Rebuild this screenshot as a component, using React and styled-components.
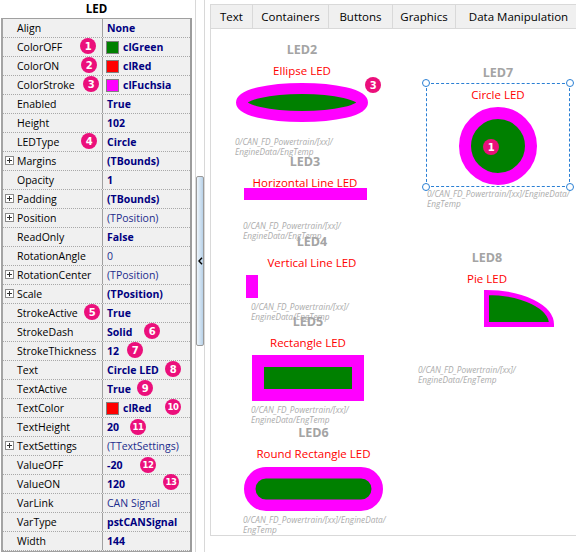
import React from 'react';
import styled, { createGlobalStyle } from 'styled-components';

const UI = `"Open Sans", "Noto Sans", "Liberation Sans", sans-serif`;
const OX = 211;
const OY = 29;

const Global = createGlobalStyle`
  html, body { margin: 0; padding: 0; background: #fff; }
  body { width: 576px; height: 552px; overflow: hidden; font-family: ${UI}; }
  #root { width: 576px; height: 552px; }
`;

const Page = styled.div`
  display: flex;
  width: 576px;
  height: 552px;
  overflow: hidden;
  background: #fff;
`;

/* ---------- Object inspector ---------- */
const Inspector = styled.div`
  position: relative;
  flex: none;
  width: 193px;
  display: flex;
  flex-direction: column;
`;
const InspectorTitle = styled.div`
  height: 18px;
  line-height: 18px;
  text-align: center;
  font-weight: 700;
  font-size: 11.5px;
  color: #000;
`;
const Grid = styled.div`
  flex: none;
  margin-left: 1px;
  width: 191px;
  box-sizing: border-box;
  border-top: 1px solid #a0a0a0;
  border-left: 2px solid #a4a4a4;
  border-right: 2px solid #9c9c9c;
  border-bottom: 1px solid #a0a0a0;
  background: #f0f0f0;
`;
const Row = styled.div`
  display: flex;
  height: 19px;
  box-sizing: border-box;
  border-bottom: 1px dotted #a8a8a8;
`;
const Name = styled.div`
  position: relative;
  flex: none;
  width: 100px;
  box-sizing: border-box;
  border-right: 1px solid #a0a0a0;
  padding-left: 14px;
  font-size: 10.5px;
  line-height: 18px;
  color: #000;
  white-space: nowrap;
`;
const Value = styled.div`
  flex: 1;
  display: flex;
  align-items: center;
  gap: 4px;
  padding-left: 4px;
  font-size: 10.5px;
  font-weight: ${p => (p.$bold ? 700 : 400)};
  color: ${p => (p.$bold ? '#000080' : '#1c2c8c')};
  white-space: nowrap;
  overflow: hidden;
`;
const Expander = styled.span`
  position: absolute;
  left: 2px;
  top: 4px;
  width: 9px;
  height: 9px;
  box-sizing: border-box;
  border: 1px solid #8a8a8a;
  background: #fff;
  &::before {
    content: '';
    position: absolute;
    left: 1px;
    top: 3px;
    width: 5px;
    height: 1px;
    background: #303030;
  }
  &::after {
    content: '';
    position: absolute;
    left: 3px;
    top: 1px;
    width: 1px;
    height: 5px;
    background: #303030;
  }
`;
const Swatch = styled.span`
  flex: none;
  margin-left: -1px;
  width: 13px;
  height: 13px;
  box-sizing: border-box;
  border: 1px solid #808080;
  background: ${p => p.$color};
`;

const Badge = styled.div`
  position: absolute;
  left: ${p => p.$cx - 8}px;
  top: ${p => p.$cy - 8}px;
  width: 16px;
  height: 16px;
  border-radius: 50%;
  background: #eb0f7b;
  color: #fff;
  font-family: "DejaVu Sans", sans-serif;
  font-weight: 700;
  font-size: ${p => (p.$n > 9 ? 8.5 : 10)}px;
  display: flex;
  align-items: center;
  justify-content: center;
  z-index: 5;
  letter-spacing: -0.3px;
`;

/* ---------- Splitter ---------- */
const Splitter = styled.div`
  flex: none;
  width: 17px;
  padding-left: 2px;
  box-sizing: border-box;
  display: flex;
`;
const SplitTrack = styled.div`
  width: 10px;
  box-sizing: border-box;
  border-left: 1px solid #d8d8d8;
  border-right: 1px solid #d8d8d8;
  padding-top: 176px;
  display: flex;
  justify-content: center;
  align-items: flex-start;
`;
const SplitThumb = styled.div`
  width: 8px;
  height: 170px;
  box-sizing: border-box;
  border: 1px solid #9a9a9a;
  border-radius: 2px;
  background: linear-gradient(to right, #eef5fb, #b7d1e8);
  display: flex;
  align-items: center;
  justify-content: center;
`;

/* ---------- Designer ---------- */
const Designer = styled.div`
  flex: none;
  width: 372px;
  height: 536px;
  padding-top: 4px;
  box-sizing: border-box;
  display: flex;
  flex-direction: column;
`;
const DesignerFrame = styled.div`
  flex: 1;
  display: flex;
  flex-direction: column;
  border: 1px solid #d9d9d9;
  border-right: none;
`;
const TabStrip = styled.div`
  flex: none;
  display: flex;
  height: 24px;
  box-sizing: border-box;
  border-bottom: 1px solid #d9d9d9;
  background: #f0f0f0;
`;
const Tab = styled.div`
  flex: none;
  width: ${p => p.$w}px;
  box-sizing: border-box;
  border-right: 1px solid #d9d9d9;
  display: flex;
  align-items: center;
  justify-content: center;
  font-size: 11.5px;
  color: #000;
  white-space: nowrap;
`;
const Canvas = styled.div`
  position: relative;
  flex: 1;
  background: #fff;
  overflow: hidden;
`;

/* an LED component placed on the free design canvas */
const LedNode = styled.div`
  position: absolute;
  left: ${p => p.$x - OX}px;
  top: ${p => p.$y - OY}px;
  width: ${p => p.$w}px;
  display: flex;
  flex-direction: column;
  align-items: center;
  gap: 4px;
`;
const LedName = styled.div`
  height: 18px;
  font-weight: 700;
  font-size: 12.5px;
  line-height: 18px;
  color: #a4a4a4;
  white-space: nowrap;
`;
const LedText = styled.div`
  height: 16px;
  font-size: 11.5px;
  line-height: 16px;
  color: #ff0000;
  white-space: nowrap;
`;
const ShapeSlot = styled.div`
  align-self: ${p => (p.$start ? 'flex-start' : 'center')};
  margin-top: ${p => p.$mt || 0}px;
  margin-left: ${p => p.$ml || 0}px;
  line-height: 0;
  svg { display: block; overflow: visible; }
`;
const Caption = styled.div`
  align-self: flex-start;
  margin-top: ${p => p.$mt || 0}px;
  margin-left: ${p => p.$ml || 0}px;
  font-style: italic;
  font-size: 8.3px;
  line-height: 10px;
  color: #ababab;
  white-space: nowrap;
  position: relative;
  z-index: 1;
`;
const Selection = styled.div`
  position: relative;
  margin-top: -3px;
  width: 144px;
  height: 104px;
  box-sizing: border-box;
  padding-top: 3px;
  border: 1px dashed #2a7fd4;
  display: flex;
  flex-direction: column;
  align-items: center;
  gap: 3.5px;
  z-index: 2;
`;
const Handle = styled.span`
  position: absolute;
  width: 8px;
  height: 8px;
  box-sizing: border-box;
  border: 1px solid #2a7fd4;
  border-radius: 50%;
  background: #fff;
  left: ${p => (p.$r ? 'auto' : '-5px')};
  right: ${p => (p.$r ? '-5px' : 'auto')};
  top: ${p => (p.$b ? 'auto' : '-5px')};
  bottom: ${p => (p.$b ? '-5px' : 'auto')};
`;
const CanvasBadge = styled(Badge)`
  left: ${p => p.$cx - OX - 8}px;
  top: ${p => p.$cy - OY - 8}px;
`;

const props = [
  { l: 'Align', v: 'None', b: true },
  { l: 'ColorOFF', v: 'clGreen', b: true, sw: '#008000' },
  { l: 'ColorON', v: 'clRed', b: true, sw: '#ff0000' },
  { l: 'ColorStroke', v: 'clFuchsia', b: true, sw: '#ff00ff' },
  { l: 'Enabled', v: 'True', b: true },
  { l: 'Height', v: '102', b: true },
  { l: 'LEDType', v: 'Circle', b: true },
  { l: 'Margins', v: '(TBounds)', b: true, plus: true },
  { l: 'Opacity', v: '1', b: true },
  { l: 'Padding', v: '(TBounds)', b: true, plus: true },
  { l: 'Position', v: '(TPosition)', plus: true },
  { l: 'ReadOnly', v: 'False', b: true },
  { l: 'RotationAngle', v: '0' },
  { l: 'RotationCenter', v: '(TPosition)', plus: true },
  { l: 'Scale', v: '(TPosition)', b: true, plus: true },
  { l: 'StrokeActive', v: 'True', b: true },
  { l: 'StrokeDash', v: 'Solid', b: true },
  { l: 'StrokeThickness', v: '12', b: true },
  { l: 'Text', v: 'Circle LED', b: true },
  { l: 'TextActive', v: 'True', b: true },
  { l: 'TextColor', v: 'clRed', b: true, sw: '#ff0000' },
  { l: 'TextHeight', v: '20', b: true },
  { l: 'TextSettings', v: '(TTextSettings)', plus: true },
  { l: 'ValueOFF', v: '-20', b: true },
  { l: 'ValueON', v: '120', b: true },
  { l: 'VarLink', v: 'CAN Signal' },
  { l: 'VarType', v: 'pstCANSignal', b: true },
  { l: 'Width', v: '144', b: true },
];

const inspectorBadges = [
  { n: 1, x: 88, y: 46 },
  { n: 2, x: 89, y: 65 },
  { n: 3, x: 91, y: 84 },
  { n: 4, x: 89, y: 141 },
  { n: 5, x: 92, y: 312 },
  { n: 6, x: 152, y: 331 },
  { n: 7, x: 135, y: 350 },
  { n: 8, x: 173, y: 369 },
  { n: 9, x: 145, y: 388 },
  { n: 10, x: 173, y: 407 },
  { n: 11, x: 138, y: 427 },
  { n: 12, x: 148, y: 465 },
  { n: 13, x: 171, y: 482 },
];

const tabs = [
  { t: 'Text', w: 42 },
  { t: 'Containers', w: 76 },
  { t: 'Buttons', w: 64 },
  { t: 'Graphics', w: 63 },
  { t: 'Data Manipulation', w: 126 },
];

const MAG = '#ff00ff';
const GRN = '#008000';
const P1 = '0/CAN_FD_Powertrain/[xx]/';
const P2 = 'EngineData/EngTemp';
const L1 = '0/CAN_FD_Powertrain/[xx]/EngineData/';
const L2 = 'EngTemp';

const VarPath = ({ a, b, mt, ml }) => (
  <Caption $mt={mt} $ml={ml}>
    {a}
    <br />
    {b}
  </Caption>
);

export default function App() {
  return (
    <Page>
      <Global />
      <Inspector>
        <InspectorTitle>LED</InspectorTitle>
        <Grid>
          {props.map(p => (
            <Row key={p.l}>
              <Name>
                {p.plus && <Expander />}
                {p.l}
              </Name>
              <Value $bold={p.b}>
                {p.sw && <Swatch $color={p.sw} />}
                {p.v}
              </Value>
            </Row>
          ))}
        </Grid>
        {inspectorBadges.map(b => (
          <Badge key={b.n} $n={b.n} $cx={b.x} $cy={b.y}>
            {b.n}
          </Badge>
        ))}
      </Inspector>

      <Splitter>
        <SplitTrack>
          <SplitThumb>
            <svg width="5" height="8" viewBox="0 0 5 8">
              <path d="M4 0.8 L1 4 L4 7.2" fill="none" stroke="#000" strokeWidth="1.4" />
            </svg>
          </SplitThumb>
        </SplitTrack>
      </Splitter>

      <Designer>
        <DesignerFrame>
          <TabStrip>
            {tabs.map(t => (
              <Tab key={t.t} $w={t.w}>
                {t.t}
              </Tab>
            ))}
          </TabStrip>
          <Canvas>
            {/* LED2 ellipse */}
            <LedNode $x={235} $y={41} $w={134}>
              <LedName>LED2</LedName>
              <LedText>Ellipse LED</LedText>
              <ShapeSlot>
                <svg width="132" height="39">
                  <ellipse cx="66" cy="19.5" rx="60.5" ry="14" fill={GRN} stroke={MAG} strokeWidth="11" />
                </svg>
              </ShapeSlot>
              <VarPath a={P1} b={P2} mt={11} />
            </LedNode>

            {/* LED3 horizontal line */}
            <LedNode $x={243} $y={153} $w={124}>
              <LedName>LED3</LedName>
              <LedText>Horizontal Line LED</LedText>
              <ShapeSlot $mt={-7}>
                <svg width="123" height="12">
                  <rect x="0" y="0" width="123" height="12" fill={MAG} />
                </svg>
              </ShapeSlot>
              <VarPath a={P1} b={P2} mt={17} />
            </LedNode>

            {/* LED4 vertical line */}
            <LedNode $x={246} $y={232.5} $w={132}>
              <LedName>LED4</LedName>
              <LedText>Vertical Line LED</LedText>
              <ShapeSlot $start>
                <svg width="12" height="23">
                  <rect x="0" y="0" width="12" height="23" fill={MAG} />
                </svg>
              </ShapeSlot>
              <VarPath a={P1} b={P2} ml={5} />
            </LedNode>

            {/* LED5 rectangle */}
            <LedNode $x={251} $y={312.5} $w={114}>
              <LedName>LED5</LedName>
              <LedText>Rectangle LED</LedText>
              <ShapeSlot>
                <svg width="112" height="46">
                  <rect x="6" y="6" width="100" height="34" fill={GRN} stroke={MAG} strokeWidth="12" />
                </svg>
              </ShapeSlot>
              <VarPath a={P1} b={P2} />
            </LedNode>

            {/* LED6 round rectangle */}
            <LedNode $x={243} $y={424} $w={141}>
              <LedName>LED6</LedName>
              <LedText>Round Rectangle LED</LedText>
              <ShapeSlot $mt={1}>
                <svg width="139" height="44">
                  <rect x="5.75" y="5.75" width="127.5" height="32.5" rx="16.25" fill={GRN} stroke={MAG} strokeWidth="11.5" />
                </svg>
              </ShapeSlot>
              <VarPath a={L1} b={L2} />
            </LedNode>

            {/* LED7 circle (selected) */}
            <LedNode $x={426} $y={64} $w={144}>
              <LedName>LED7</LedName>
              <Selection>
                <Handle />
                <Handle $r />
                <Handle $b />
                <Handle $r $b />
                <LedText>Circle LED</LedText>
                <ShapeSlot>
                  <svg width="78" height="78">
                    <circle cx="39" cy="39" r="33" fill={GRN} stroke={MAG} strokeWidth="12" />
                  </svg>
                </ShapeSlot>
              </Selection>
              <VarPath a={L1} b={L2} mt={-2.5} ml={1} />
            </LedNode>
            <CanvasBadge $n={1} $cx={491} $cy={147}>1</CanvasBadge>

            {/* LED8 pie */}
            <LedNode $x={418} $y={249} $w={138}>
              <LedName>LED8</LedName>
              <LedText>Pie LED</LedText>
              <ShapeSlot $start $ml={66} $mt={-1}>
                <svg width="70" height="37">
                  <path d="M2.5 34.5 V2.5 A65 32 0 0 1 67.5 34.5 Z" fill={GRN} stroke={MAG} strokeWidth="5" strokeLinejoin="miter" />
                </svg>
              </ShapeSlot>
              <VarPath a={P1} b={P2} mt={34} />
            </LedNode>

            <CanvasBadge $n={3} $cx={373} $cy={85}>3</CanvasBadge>
          </Canvas>
        </DesignerFrame>
      </Designer>
    </Page>
  );
}
